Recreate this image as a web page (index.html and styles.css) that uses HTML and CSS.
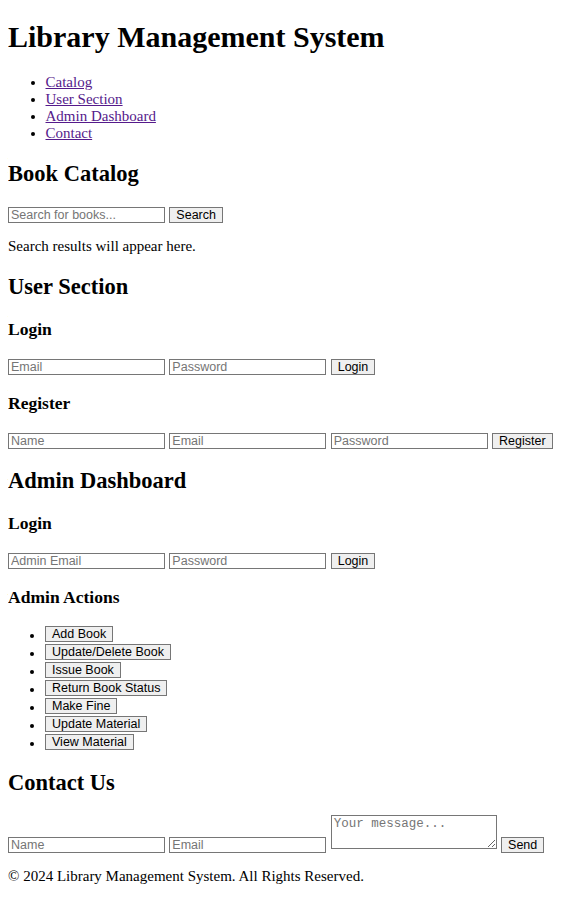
FILE: index.html
```html
<!DOCTYPE html>
<html lang="en">
<head>
<meta charset="UTF-8">
<title>Library Management System</title>
<link rel="stylesheet" href="styles.css">
</head>
<body class="page">
<header>
  <h1 class="title">Library Management System</h1>
  <nav>
    <ul class="nav-list">
      <li><a class="nav-link" href="#catalog">Catalog</a></li>
      <li><a class="nav-link" href="#user">User Section</a></li>
      <li><a class="nav-link" href="#admin">Admin Dashboard</a></li>
      <li><a class="nav-link" href="#contact">Contact</a></li>
    </ul>
  </nav>
</header>
<main>
  <section id="catalog">
    <h2 class="section-title">Book Catalog</h2>
    <form class="form"><input class="field" type="text" placeholder="Search for books..."> <button class="btn" type="button">Search</button></form>
    <p class="text">Search results will appear here.</p>
  </section>
  <section id="user">
    <h2 class="section-title">User Section</h2>
    <h3 class="sub-title">Login</h3>
    <form class="form"><input class="field" type="email" placeholder="Email"> <input class="field" type="password" placeholder="Password"> <button class="btn" type="button">Login</button></form>
    <h3 class="sub-title">Register</h3>
    <form class="form"><input class="field" type="text" placeholder="Name"> <input class="field" type="email" placeholder="Email"> <input class="field" type="password" placeholder="Password"> <button class="btn" type="button">Register</button></form>
  </section>
  <section id="admin">
    <h2 class="section-title">Admin Dashboard</h2>
    <h3 class="sub-title">Login</h3>
    <form class="form"><input class="field" type="email" placeholder="Admin Email"> <input class="field" type="password" placeholder="Password"> <button class="btn" type="button">Login</button></form>
    <h3 class="sub-title">Admin Actions</h3>
    <ul class="action-list">
      <li class="action-item"><button class="btn action-btn" type="button">Add Book</button></li>
      <li class="action-item"><button class="btn action-btn" type="button">Update/Delete Book</button></li>
      <li class="action-item"><button class="btn action-btn" type="button">Issue Book</button></li>
      <li class="action-item"><button class="btn action-btn" type="button">Return Book Status</button></li>
      <li class="action-item"><button class="btn action-btn" type="button">Make Fine</button></li>
      <li class="action-item"><button class="btn action-btn" type="button">Update Material</button></li>
      <li class="action-item"><button class="btn action-btn" type="button">View Material</button></li>
    </ul>
  </section>
  <section id="contact">
    <h2 class="section-title">Contact Us</h2>
    <form class="form"><input class="field" type="text" placeholder="Name"> <input class="field" type="email" placeholder="Email"> <textarea class="area" placeholder="Your message..."></textarea> <button class="btn" type="button">Send</button></form>
  </section>
</main>
<footer>
  <p class="text">&copy; 2024 Library Management System. All Rights Reserved.</p>
</footer>
</body>
</html>
```
FILE: styles.css
```css
.page {
  margin: 8px;
  font-family: "Liberation Serif", "Times New Roman", serif;
  font-size: 15px;
  color: #000;
  background: #fff;
}
.title {
  font-size: 30px;
  margin: 12px 0 20.1px;
}
.nav-list {
  margin: 15px 0;
  padding-left: 37.5px;
}
.nav-link {
  color: #551a8b;
}
.section-title {
  font-size: 22.5px;
  margin: 18.7px 0;
}
.sub-title {
  font-size: 17.55px;
  margin: 17.55px 0;
}
.form {
  margin: 0;
  line-height: 18px;
  word-spacing: 0.6px;
}
.text {
  margin: 15px 0;
}
.field {
  box-sizing: border-box;
  width: 157px;
  height: 16px;
  margin: 0;
  padding: 0 2px;
  border: 1px solid #767676;
  border-radius: 0;
  font-family: "Liberation Sans", Arial, sans-serif;
  font-size: 12.5px;
  line-height: 14px;
  word-spacing: 0;
  color: #000;
  background: #fff;
}
.field::placeholder,
.area::placeholder {
  color: #757575;
}
.area {
  box-sizing: border-box;
  width: 166px;
  height: 34px;
  margin: 0;
  padding: 1px 2px;
  border: 1px solid #767676;
  border-radius: 0;
  font-family: "Liberation Mono", "Courier New", monospace;
  font-size: 12.5px;
  line-height: 15px;
  word-spacing: 0;
  background: #fff;
}
.btn {
  box-sizing: border-box;
  height: 16px;
  margin: 0;
  padding: 0 6px;
  border: 1px solid #767676;
  border-radius: 0;
  background: #efefef;
  font-family: "Liberation Sans", Arial, sans-serif;
  font-size: 12.5px;
  line-height: 14px;
  word-spacing: 0;
  color: #000;
}
.action-list {
  margin: 15px 0;
  padding-left: 37px;
}
.action-item {
  line-height: 18px;
}
.action-btn {
  vertical-align: 2px;
}
```
